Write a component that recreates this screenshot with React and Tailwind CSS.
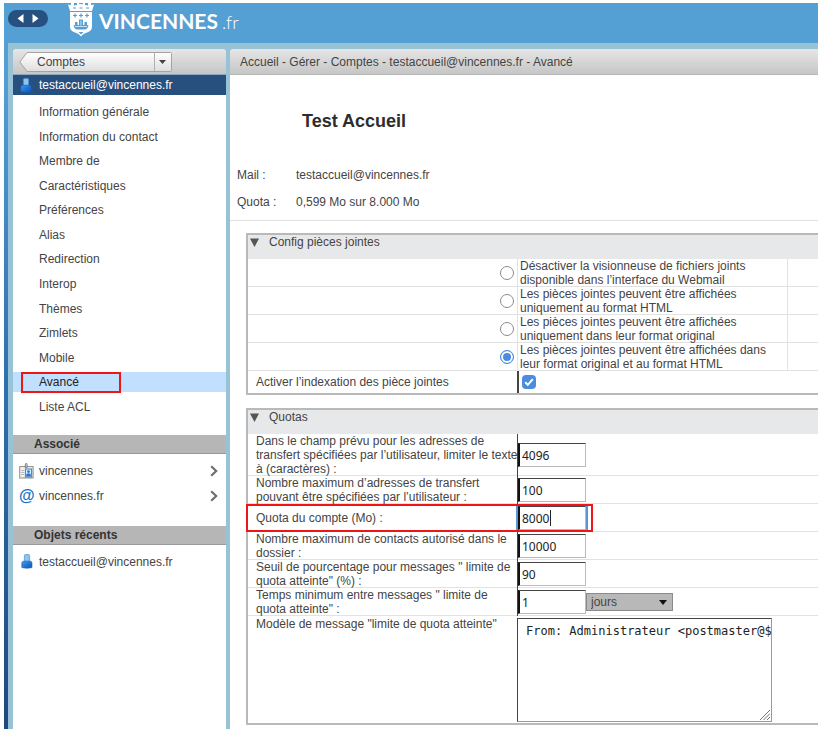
import React from 'react';
import clsx from 'clsx';

const menuItems = [
  'Information générale',
  'Information du contact',
  'Membre de',
  'Caractéristiques',
  'Préférences',
  'Alias',
  'Redirection',
  'Interop',
  'Thèmes',
  'Zimlets',
  'Mobile',
  'Avancé',
  'Liste ACL',
];

const viewerOptions = [
  ['Désactiver la visionneuse de fichiers joints', 'disponible dans l’interface du Webmail'],
  ['Les pièces jointes peuvent être affichées', 'uniquement au format HTML'],
  ['Les pièces jointes peuvent être affichées', 'uniquement dans leur format original'],
  ['Les pièces jointes peuvent être affichées dans', 'leur format original et au format HTML'],
];

const quotaFields = [
  {
    id: 'forward-length',
    lines: ['Dans le champ prévu pour les adresses de', 'transfert spécifiées par l’utilisateur, limiter le texte', 'à (caractères) :'],
    value: '4096',
  },
  { id: 'forward-max', lines: ['Nombre maximum d’adresses de transfert', 'pouvant être spécifiées par l’utilisateur :'], value: '100' },
  { id: 'account-quota', lines: ['Quota du compte (Mo) :'], value: '8000', active: true },
  { id: 'contacts-max', lines: ['Nombre maximum de contacts autorisé dans le', 'dossier :'], value: '10000' },
  { id: 'warn-percent', lines: ['Seuil de pourcentage pour messages " limite de', 'quota atteinte" (%) :'], value: '90' },
  { id: 'warn-interval', lines: ['Temps minimum entre messages " limite de', 'quota atteinte" :'], value: '1', unit: 'jours' },
];

const Lines = ({ lines }) =>
  lines.map((line) => (
    <span key={line} className="block whitespace-nowrap">
      {line}
    </span>
  ));

const UserIcon = () => (
  <svg viewBox="0 0 12 15" className="h-[15px] w-3" aria-hidden="true">
    <defs>
      <linearGradient id="user-body" x1="0" y1="0" x2="1" y2="1">
        <stop offset="0" stopColor="#3b9bee" />
        <stop offset="1" stopColor="#0b52bd" />
      </linearGradient>
    </defs>
    <path d="M3.4 1.6q0-1 1-1h3.2q1 0 1 1v6H3.4z" fill="#8cc4f2" stroke="#4a90cf" strokeWidth="0.7" />
    <path d="M0.8 9q0-1.8 1.8-1.8h6.6q1.8 0 1.8 1.8v4.6q-5 1.4-10.2 0z" fill="url(#user-body)" stroke="#1a62b8" strokeWidth="0.6" />
  </svg>
);

const BadgeIcon = () => (
  <svg viewBox="0 0 15 16" className="h-4 w-[15px]" aria-hidden="true">
    <rect x="0.7" y="3.6" width="13.4" height="11.4" fill="#f2f2f2" stroke="#8d8d8d" />
    <path d="M6.3 4.6V1.4q0-.9.9-.9t.9.9v3.2z" fill="#ddd" stroke="#666" strokeWidth="0.8" />
    <path d="M2.2 7.5h3M2.2 9.5h3M2.2 11.5h3" stroke="#b5b5b5" />
    <rect x="6.4" y="6" width="6.2" height="8" fill="#d5ebfb" stroke="#3b86c6" />
    <circle cx="9.5" cy="8.6" r="1.3" fill="#2a75bd" />
    <path d="M7.3 13.4v-1.600q0-1.200 1.200-1.200h2q1.200 0 1.200 1.200v1.600z" fill="#2a75bd" />
  </svg>
);

const ChevronIcon = () => (
  <svg viewBox="0 0 8 12" className="h-3 w-2" aria-hidden="true">
    <path d="M1.2 1.2 6.2 6l-5 4.8" fill="none" stroke="#6e6e6e" strokeWidth="2.2" />
  </svg>
);

const CrestIcon = () => (
  <svg viewBox="0 0 28 34" className="h-[34px] w-7" aria-hidden="true">
    {/* crown */}
    <path d="M1 1.500 4 2V0h3v2.500l3-.5V0h2v1h4V0h2v2l3 .5V0h3v2l3-.5L25 8H3z" fill="#fff" />
    <path d="M6 5h3M12.500 5h3M19 5h3" stroke="#549fd3" strokeWidth="1" />
    {/* shield */}
    <path d="M3 9h22v14.500q0 4.500-5 6-4 1-6 4-2-3-6-4-5-1.500-5-6z" fill="#fff" />
    <path d="M8 10.500v4M6 12.500h4M14 10.500v4M12 12.500h4M20 10.500v4M18 12.500h4" stroke="#549fd3" strokeWidth="1.200" />
    <path d="M8 19h2.500v3H12v-5.500h4V22h1.500v-3H20v3l1.500.5q-1 4-4 4h-7q-3 0-4-4L8 22z" fill="#549fd3" />
    <path d="M8 23.500h12M14 17.500v5" stroke="#fff" strokeWidth="0.7" />
    <path d="M11.500 29h5L14 31.500z" fill="#549fd3" />
  </svg>
);

const Header = () => (
  <header className="flex h-10 items-start">
    <div className="ml-1 mt-[7px] flex h-[17px] w-10 items-center justify-center gap-2 rounded-full bg-[#26507f]">
      <button type="button" aria-label="Précédent">
        <svg viewBox="0 0 7 9" className="h-[9px] w-[7px]"><path d="M6.500 0v9L.5 4.500z" fill="#fff" /></svg>
      </button>
      <button type="button" aria-label="Suivant">
        <svg viewBox="0 0 7 9" className="h-[9px] w-[7px]"><path d="M.5 0v9l6-4.500z" fill="#fff" /></svg>
      </button>
    </div>
    <div className="ml-[19px] flex items-start text-white">
      <CrestIcon />
      <span className="ml-1 mt-[3px] font-['Lato'] text-[21px] leading-[30px] font-bold">VINCENNES</span>
      <span className="ml-1 mt-[3px] font-['Lato'] text-lg leading-[32px] font-light">.fr</span>
    </div>
  </header>
);

const SideHeading = ({ children }) => (
  <h2 className="h-[19px] border-b border-[#999] bg-[#b6b6b6] pl-[21px] leading-[18px] font-bold text-[#333]">{children}</h2>
);

const SideLink = ({ icon, label, chevron }) => (
  <a href="#" className="flex h-[25px] items-center pr-2 pl-[5px]">
    <span className="flex w-[17px] justify-center">{icon}</span>
    <span className="ml-1 flex-1">{label}</span>
    {chevron && <ChevronIcon />}
  </a>
);

const Sidebar = () => (
  <nav className="w-[213px] shrink-0 rounded-t bg-white">
    <div className="flex h-[25px] items-center rounded-t bg-linear-to-b from-[#e6e6e6] to-[#c6c6c6] pl-1.5">
      <button type="button" className="relative flex h-5 w-[153px] items-center text-left">
        <svg viewBox="0 0 153 20" className="absolute inset-0 h-full w-full" aria-hidden="true">
          <defs>
            <linearGradient id="back-fill" x1="0" y1="0" x2="0" y2="1">
              <stop offset="0" stopColor="#fff" />
              <stop offset="1" stopColor="#dedede" />
            </linearGradient>
          </defs>
          <path d="M8 .5h143.500q1 0 1 1v17q0 1-1 1H8L.8 10z" fill="url(#back-fill)" stroke="#a3a3a3" />
          <path d="M135.500 1v18" stroke="#b0b0b0" />
          <path d="M140 8h7l-3.500 4z" fill="#444" />
        </svg>
        <span className="relative ml-[18px]">Comptes</span>
      </button>
    </div>
    <a href="#" className="flex h-[21px] items-center border-t border-[#8fa6bd] bg-[#28507f] pl-[7px] text-white">
      <UserIcon />
      <span className="ml-[7px]">testaccueil@vincennes.fr</span>
    </a>
    <ul className="mt-[5px] grid h-[319px] auto-rows-fr">
      {menuItems.map((item) => {
        const current = item === 'Avancé';
        return (
          <li key={item} className="flex items-center">
            <a
              href="#"
              className={clsx('relative flex h-5 w-full items-center pl-[26px]', current && 'bg-[#c1dfff] text-[#222]')}
            >
              {item}
              {current && <span className="absolute -bottom-px top-0 left-2 w-[100px] border-2 border-[#f01414]" />}
            </a>
          </li>
        );
      })}
    </ul>
    <div className="mt-4">
      <SideHeading>Associé</SideHeading>
      <div className="mt-1">
        <SideLink icon={<BadgeIcon />} label="vincennes" chevron />
        <SideLink icon={<span className="text-base font-bold text-[#1e6fc4] italic">@</span>} label="vincennes.fr" chevron />
      </div>
    </div>
    <div className="mt-[18px]">
      <SideHeading>Objets récents</SideHeading>
      <div className="mt-1">
        <SideLink icon={<UserIcon />} label="testaccueil@vincennes.fr" />
      </div>
    </div>
  </nav>
);

const Panel = ({ title, children }) => (
  <section className="border-y-2 border-l-2 border-[#b9b9b9]">
    <h2 className="flex h-6 items-start bg-[#e7e8ea]">
      <button type="button" className="flex items-center leading-[14px]">
        <svg viewBox="0 0 9 9" className="ml-[2px] h-[9px] w-[9px]" aria-hidden="true">
          <path d="M0 .5h9L4.500 9z" fill="#555" />
        </svg>
        <span className="ml-2.5">{title}</span>
      </button>
    </h2>
    {children}
  </section>
);

const rowLine = 'shadow-[inset_0_-1px_#e2e2e2]';
const inputStyle =
  "h-6 w-[68px] border border-l-2 border-t-[#444] border-r-[#bbb] border-b-[#bbb] border-l-[#111] bg-white pl-0.5 font-['Noto_Sans'] text-xs text-[#222] outline-none";

const AttachmentsPanel = () => (
  <Panel title="Config pièces jointes">
    <div role="radiogroup" aria-label="Config pièces jointes">
      {viewerOptions.map((lines, i) => (
        <div key={lines.join(' ')} className={clsx('flex h-7 items-center leading-[14px]', rowLine)}>
          <div className="flex w-[270px] items-center justify-end self-stretch border-r border-[#e2e2e2] pr-[3px]">
            <input
              type="radio"
              name="viewer"
              id={`viewer-${i}`}
              defaultChecked={i === 3}
              className="h-3.5 w-3.5 appearance-none rounded-full border border-[#8c8c8c] bg-white checked:border-[#4a8de0] checked:bg-[#4a8de0] checked:shadow-[inset_0_0_0_2px_#fff]"
            />
          </div>
          <label htmlFor={`viewer-${i}`} className="w-[270px] border-r border-[#e2e2e2] pl-0.5">
            <Lines lines={lines} />
          </label>
        </div>
      ))}
    </div>
    <div className="flex h-[22px] items-stretch">
      <label htmlFor="indexing" className="w-[269px] pl-2 leading-[22px]">Activer l’indexation des pièce jointes</label>
      <div className="flex items-center border-l-2 border-[#444] pl-[3px]">
        <span className="relative flex h-3.5 w-3.5">
          <input type="checkbox" id="indexing" defaultChecked className="h-3.5 w-3.5 appearance-none rounded-sm bg-[#4a8de0]" />
          <svg viewBox="0 0 14 14" className="pointer-events-none absolute inset-0" aria-hidden="true">
            <path d="M3.200 7.200 5.800 9.800l5-5.600" fill="none" stroke="#fff" strokeWidth="2" />
          </svg>
        </span>
      </div>
    </div>
  </Panel>
);

const QuotasPanel = () => (
  <Panel title="Quotas">
    {quotaFields.map((field) => (
      <div
        key={field.id}
        className={clsx('relative flex leading-[14px]', rowLine, field.lines.length === 3 ? 'h-[42px]' : 'h-7')}
      >
        <label htmlFor={field.id} className="flex w-[269px] flex-col justify-center pl-2">
          <Lines lines={field.lines} />
        </label>
        <div className="flex items-center border-l border-[#444]">
          <input
            id={field.id}
            defaultValue={field.value}
            className={clsx(inputStyle, field.active && 'shadow-[0_0_0_2px_#5b94d6]')}
          />
          {field.unit && (
            <span className="relative flex">
              <select
                aria-label="Unité"
                className="h-[18px] w-[87px] appearance-none border border-[#8a8a8a] bg-[#b8b8b8] pl-1 text-xs leading-4 text-[#444]"
              >
                <option>{field.unit}</option>
              </select>
              <svg viewBox="0 0 8 5" className="pointer-events-none absolute top-[7px] right-1.5 h-[5px] w-2" aria-hidden="true">
                <path d="M0 0h8L4 5z" fill="#111" />
              </svg>
            </span>
          )}
        </div>
        {/* caret and frame of the field being edited */}
        {field.active && (
          <>
            <span className="absolute top-1.5 left-[302px] h-4 w-px bg-[#222]" />
            <span className="absolute inset-y-0 -left-0.5 w-[347px] border-2 border-[#f01414]" />
          </>
        )}
      </div>
    ))}
    <div className="flex h-[107px] items-start leading-[14px]">
      <label htmlFor="template" className="w-[269px] pt-px pl-2">Modèle de message "limite de quota atteinte"</label>
      <div className="relative mt-0.5 flex">
        <textarea
          id="template"
          wrap="off"
          defaultValue="From: Administrateur <postmaster@$"
          className="h-[104px] w-[255px] resize-none overflow-hidden border border-t-[#444] border-r-[#999] border-b-[#999] border-l-[#444] bg-white pt-1 pl-2 font-['DejaVu_Sans_Mono'] text-xs text-[#222] outline-none"
        />
        <svg viewBox="0 0 10 10" className="pointer-events-none absolute right-0.5 bottom-0.5 h-2.5 w-2.5" aria-hidden="true">
          <path d="M0 10 10 0M3.500 10 10 3.500M7 10l3-3" stroke="#777" />
        </svg>
      </div>
    </div>
  </Panel>
);

const Main = () => (
  <main className="min-w-0 flex-1 overflow-hidden rounded-tl bg-white">
    <div className="h-[26px] border-b border-[#b5b5b5] bg-linear-to-b from-[#e6e6e6] to-[#c6c6c6] pl-2.5 leading-[26px]">
      Accueil - Gérer - Comptes - testaccueil@vincennes.fr - Avancé
    </div>
    <div className="border-b border-[#dfdfdf] pt-[34px] pb-1">
      <h1 className="pl-[72px] text-lg leading-6 font-bold text-[#2d2d2d]">Test Accueil</h1>
      <dl className="mt-[29px] grid grid-cols-[59px_1fr] pl-[7px] leading-[27px]">
        <dt>Mail :</dt>
        <dd>testaccueil@vincennes.fr</dd>
        <dt>Quota :</dt>
        <dd>0,599 Mo sur 8.000 Mo</dd>
      </dl>
    </div>
    <form className="mt-3 flex flex-col gap-[13px] pl-4">
      <AttachmentsPanel />
      <QuotasPanel />
    </form>
  </main>
);

const App = () => (
  <div className="flex min-h-screen bg-white pt-[3px] pr-0.5 pl-1 font-['Liberation_Sans',sans-serif] text-xs text-[#444]">
    <div className="flex flex-1 flex-col bg-linear-to-b from-[#539fd4] from-10% via-[#2f72b0] via-50% to-[#20497d]">
      <div className="bg-[#549fd3]">
        <Header />
      </div>
      <div className="ml-1 flex flex-1 gap-1 bg-[#98c3d7] pt-1.5 pl-[5px]">
        <Sidebar />
        <Main />
      </div>
    </div>
  </div>
);

export default App;
